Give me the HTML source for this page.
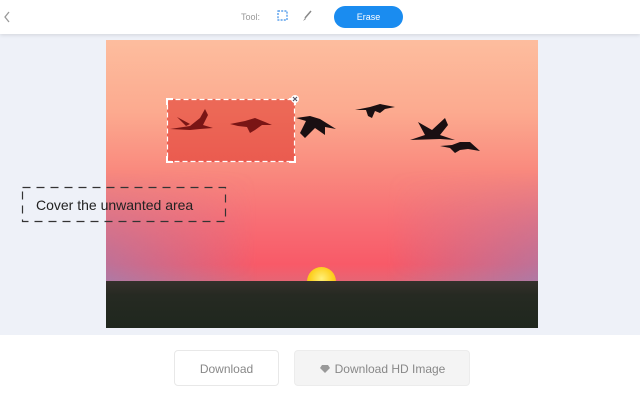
<!DOCTYPE html>
<html><head><meta charset="utf-8"><style>
*{margin:0;padding:0;box-sizing:border-box}
body{width:640px;height:400px;overflow:hidden;background:#fff;font-family:"Liberation Sans",sans-serif;position:relative}
.hdr{position:absolute;left:0;top:0;width:640px;height:34px;background:#fff;box-shadow:0 1px 4px rgba(0,0,0,.12);z-index:2}
.gray{position:absolute;left:0;top:34px;width:640px;height:301px;background:#eef1f8}
.img{position:absolute;left:106px;top:40px;width:432px;height:288px;background:linear-gradient(180deg,#fdbd9e 0%,#fcaa8f 25%,#f98a7e 45%,#f86f75 62%,#f85a68 78%,#e36777 85%,#c47a95 100%)}
.side{position:absolute;left:106px;top:170px;width:432px;height:112px;background:linear-gradient(90deg,rgba(150,130,185,.7),rgba(150,130,185,0) 35%,rgba(150,130,185,0) 65%,rgba(150,130,185,.7));-webkit-mask-image:linear-gradient(180deg,transparent,#000);mask-image:linear-gradient(180deg,transparent,#000)}
.ground{position:absolute;left:106px;top:281px;width:432px;height:47px;background:linear-gradient(180deg,#35302c,#262a22 30%,#1f271e)}
.sun{position:absolute;left:307px;top:267px;width:29px;height:29px;border-radius:50%;background:radial-gradient(circle at 50% 40%,#fff07a,#fdd020 50%,#f6a316)}
.sel{position:absolute;left:167px;top:99px;width:128px;height:63px;background:rgba(222,50,40,.55)}
.lbl{position:absolute;left:22px;top:187px;width:204px;height:35px;font-size:14px;color:#222;padding:10px 0 0 14px}
.btn{position:absolute;top:350px;height:36px;border-radius:4px;font-size:12px;color:#888;text-align:center;line-height:36px}
</style></head><body>
<div class="hdr">
<svg style="position:absolute;left:2px;top:10px" width="10" height="14"><path d="M7 2L3 7L7 12" stroke="#999" stroke-width="1.3" fill="none"/></svg>
<div style="position:absolute;left:241px;top:12px;font-size:9px;color:#999">Tool:</div>
<svg style="position:absolute;left:276px;top:9px" width="14" height="14"><rect x="2" y="2" width="9" height="9" fill="none" stroke="#3a8ee8" stroke-width="1.2" stroke-dasharray="2 1.2"/></svg>
<svg style="position:absolute;left:300px;top:9px" width="14" height="14"><path d="M11 2L5 9" stroke="#888" stroke-width="1.5"/><path d="M5 9L3 12L6 10Z" fill="#888"/></svg>
<div style="position:absolute;left:334px;top:6px;width:69px;height:22px;border-radius:11px;background:#1a8cf0;color:#fff;font-size:9px;text-align:center;line-height:22px">Erase</div>
</div>
<div class="gray"></div>
<div class="img"></div>
<div class="side"></div>
<div class="sun"></div>
<div class="ground"></div>
<svg style="position:absolute;left:0;top:0" width="640" height="400">
<g fill="#1a0f12">
<path d="M296 118L310 116L320 119L336 129L325 127L325 135L315 128L305 138L300 133L306 121Z"/>
<path d="M355 110L370 107L380 104L395 107L385 109L380 113L375 111L372 118L368 116L366 110Z"/>
<path d="M410 140L425 135L418 122L432 130L445 118L448 125L440 135L455 140L440 139Z"/>
<path d="M440 146L452 145L460 142L470 142L480 151L468 149L460 150L455 153L450 148Z"/>
</g>
</svg>
<div class="sel"></div>
<svg style="position:absolute;left:0;top:0" width="640" height="400">
<g fill="#7a1515">
<path d="M170 129L190 126L200 118L205 109L208 115L203 125L213 128L200 129L190 130Z"/>
<path d="M177 117L190 124L186 126Z"/>
<path d="M230 124L245 121L255 118L265 122L272 125L262 125L255 130L250 133L247 127L238 126Z"/>
</g>
<rect x="167.5" y="99.5" width="127" height="62" fill="none" stroke="#fff" stroke-width="1.2" stroke-dasharray="5 3"/>
<path d="M167 105V99H173M289 99H295V105M167 156V162H173M289 162H295V156" stroke="#fff" stroke-width="2" fill="none"/>
<circle cx="295" cy="99" r="4" fill="#fff"/>
<path d="M293 97L297 101M297 97L293 101" stroke="#556" stroke-width="1.2"/>
<rect x="22.5" y="187.5" width="203" height="34" fill="none" stroke="#333" stroke-width="1.2" stroke-dasharray="8 6"/>
</svg>
<div class="lbl">Cover the unwanted area</div>
<div class="btn" style="left:174px;width:105px;border:1px solid #e8e8e8;background:#fff">Download</div>
<div class="btn" style="left:294px;width:176px;background:#f4f4f4;border:1px solid #ececec">
<svg width="12" height="10" style="vertical-align:-1px;margin-right:4px"><path d="M3 1H9L11 4L6 9L1 4Z" fill="#999"/></svg>Download HD Image</div>
</body></html>
